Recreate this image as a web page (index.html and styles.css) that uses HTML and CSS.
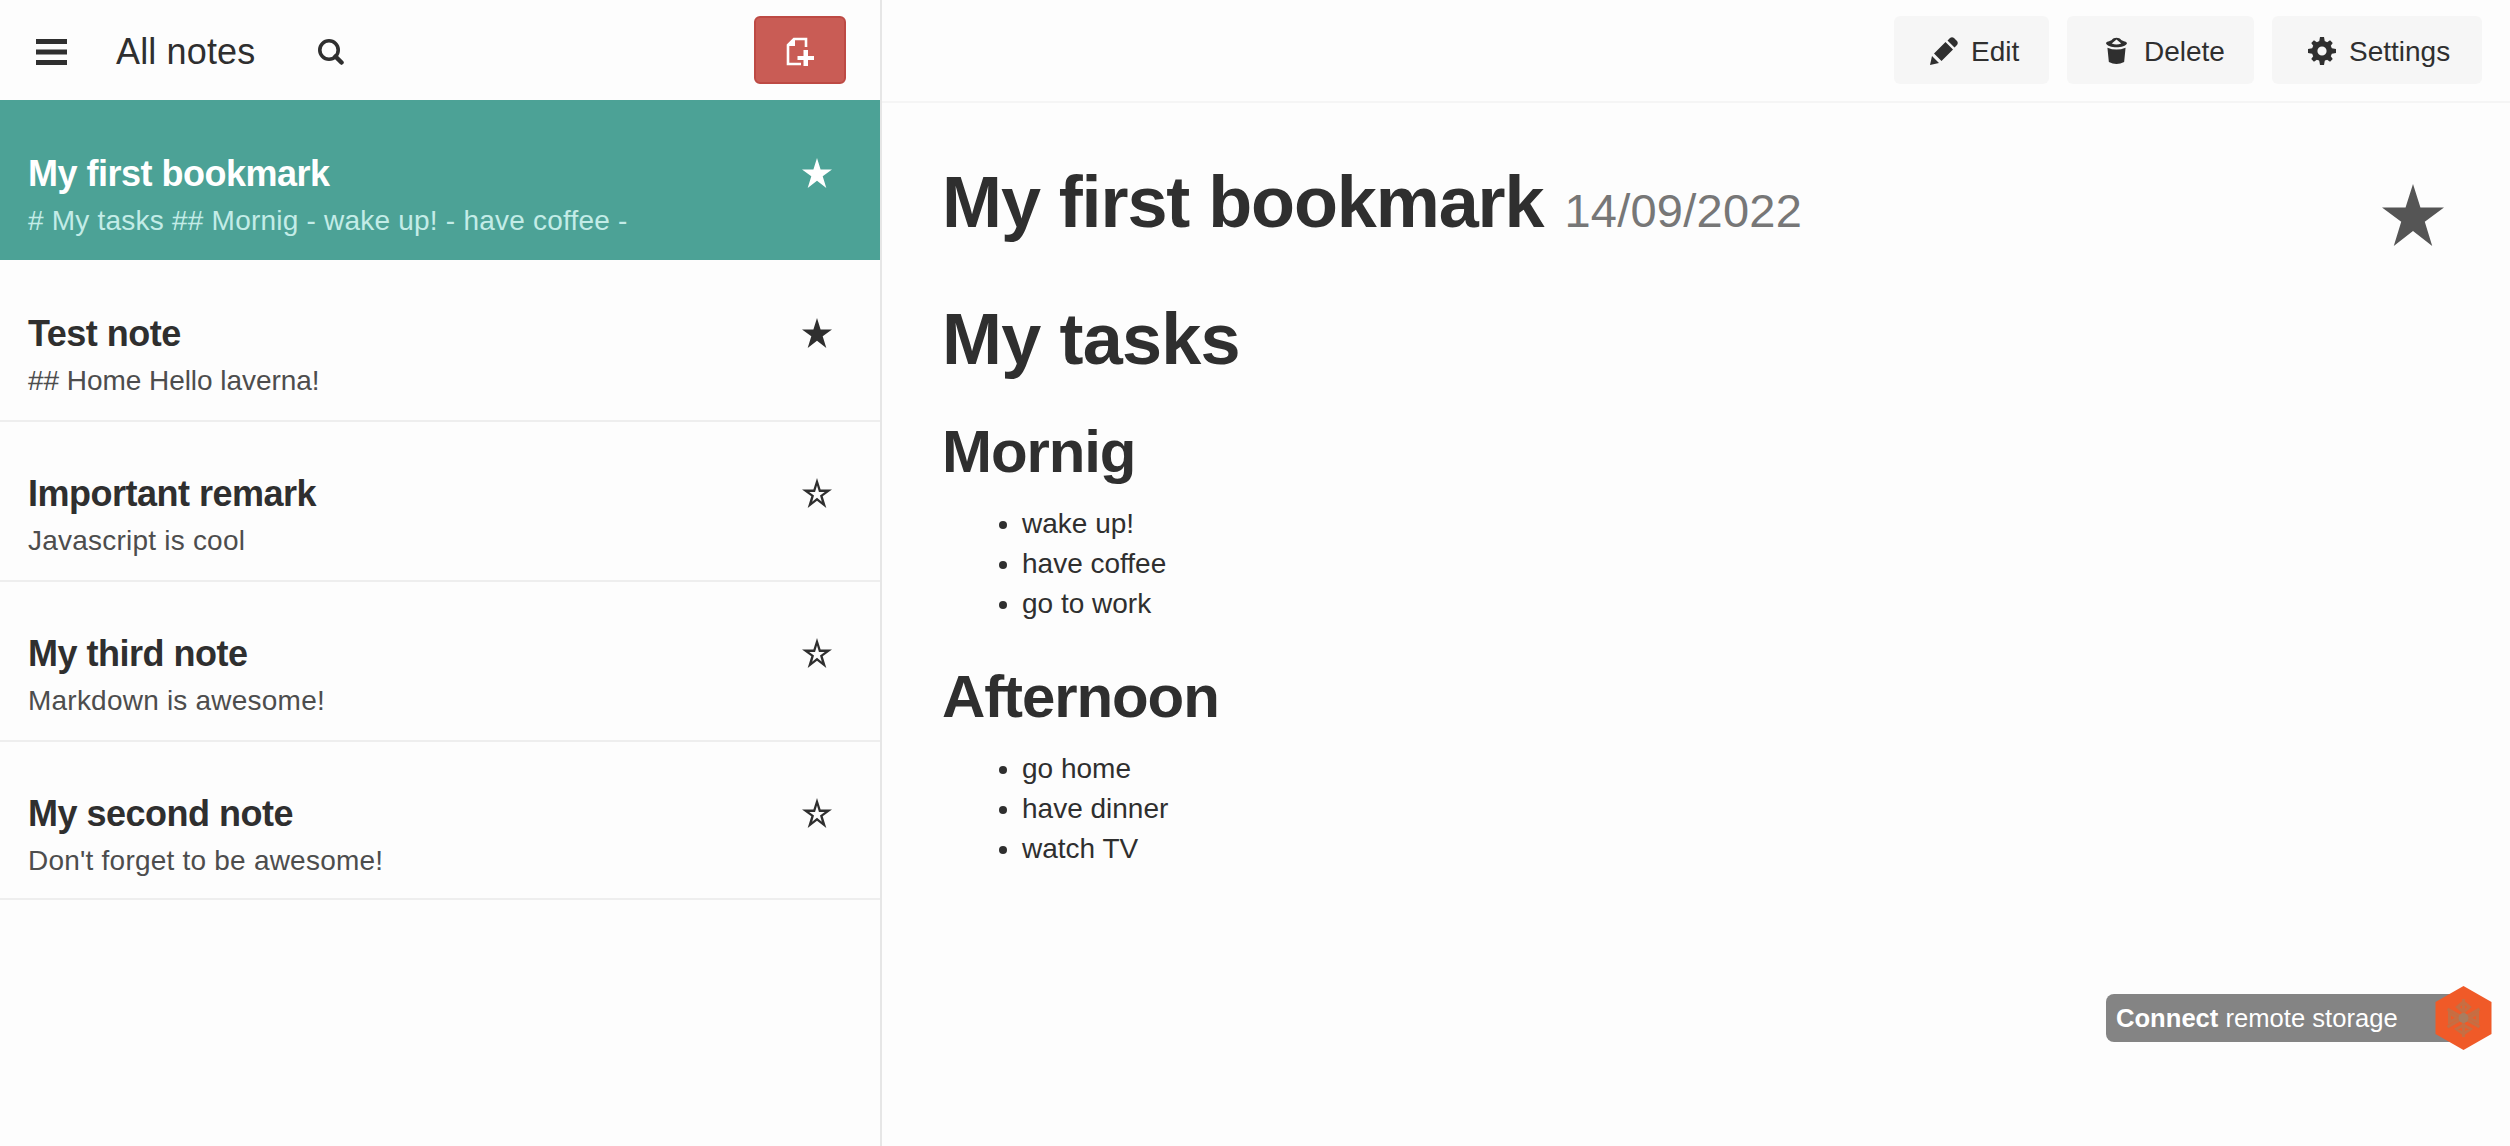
FILE: index.html
```html
<!DOCTYPE html>
<html lang="en">
<head>
<meta charset="utf-8">
<title>All notes</title>
<link rel="stylesheet" href="styles.css">
</head>
<body>
<div class="app">
  <aside class="sidebar">
    <header class="bar">
      <svg class="menu-icon" viewBox="0 0 31 26"><path d="M0 0h31v5H0zM0 10.500h31v5H0zM0 21h31v5H0z"/></svg>
      <span class="bar-title">All notes</span>
      <svg class="search-icon" viewBox="0 0 26 26"><circle cx="11" cy="11" r="9.200" fill="none" stroke="currentColor" stroke-width="3.600"/><path d="M17.500 17.500l6 6" stroke="currentColor" stroke-width="4.500" stroke-linecap="round"/></svg>
      <button class="new-note"><svg viewBox="0 0 28 30"><path d="M20 10V2H8L2 8v19h13" fill="none" stroke="currentColor" stroke-width="2.600"/><path d="M1 9h8V1z"/><path d="M17.500 13h4.500v6h6v4h-6v6h-4.500v-6h-6v-4h6z"/></svg></button>
    </header>
    <ul class="notes">
      <li class="note active"><div class="row"><h4>My first bookmark</h4><svg class="star"><use href="#star"/></svg></div><p># My tasks ## Mornig - wake up! - have coffee -</p></li>
      <li class="note"><div class="row"><h4>Test note</h4><svg class="star"><use href="#star"/></svg></div><p class="tight">## Home Hello laverna!</p></li>
      <li class="note"><div class="row"><h4>Important remark</h4><svg class="star"><use href="#star-o"/></svg></div><p>Javascript is cool</p></li>
      <li class="note"><div class="row"><h4>My third note</h4><svg class="star"><use href="#star-o"/></svg></div><p>Markdown is awesome!</p></li>
      <li class="note"><div class="row"><h4>My second note</h4><svg class="star"><use href="#star-o"/></svg></div><p>Don't forget to be awesome!</p></li>
    </ul>
  </aside>
  <main class="content">
    <header class="toolbar">
      <button class="btn edit"><svg viewBox="0 0 28 28"><path d="M0 28l2-9 7 7zM4 16.500L15.500 5l7.500 7.500L11.500 24zM17.500 3.500l2.500-2.500q2-1.500 4 0l3 3q1.500 2 0 4l-2.500 2.500z"/></svg><span>Edit</span></button>
      <button class="btn delete"><svg viewBox="0 0 22 28"><path fill-rule="evenodd" d="M0 6C0 4 4 4 6 2.500 8-.800 14-.800 16 2.500 18 4 22 4 22 6 20 11.500 2 11.500 0 6zM6 6.200q5 2 10 0L11 2z"/><path d="M1.500 10.500q9.500 4 19 0l-1.500 15q-8 4-16 0z"/></svg><span>Delete</span></button>
      <button class="btn settings"><svg viewBox="-14 -14 28 28"><circle r="7.400" fill="none" stroke="currentColor" stroke-width="5.600"/><g id="teeth"><path d="M-3-8.500L-2-14H2L3-8.500zM-3 8.500L-2 14H2L3 8.500zM-8.500-3L-14-2V2L-8.500 3zM8.500-3L14-2V2L8.500 3z"/></g><use href="#teeth" transform="rotate(45) scale(.95)"/></svg><span>Settings</span></button>
    </header>
    <article class="page">
      <div class="page-head"><h1>My first bookmark <small>14/09/2022</small></h1><svg class="big-star"><use href="#star"/></svg></div>
      <h1>My tasks</h1>
      <h2>Mornig</h2>
      <ul><li>wake up!</li><li>have coffee</li><li>go to work</li></ul>
      <h2>Afternoon</h2>
      <ul><li>go home</li><li>have dinner</li><li>watch TV</li></ul>
    </article>
  </main>
</div>
<div class="connect">
  <span><strong>Connect</strong> remote storage</span>
  <svg class="hex" viewBox="0 0 56 64"><path fill="#f05a28" d="M28 0l28 16v32L28 64 0 48V16z"/><g fill="none" stroke="#b5774f" stroke-width="3" opacity=".7"><path d="M28 13v38M12 23l32 18M44 23L12 41"/><path d="M28 16l-6 5 6 5 6-5zM14 27v9l8-4zM42 27v9l-8-4zM21 43l7-4 7 4-7 5z"/></g><circle cx="28" cy="32" r="5" fill="#a87d60"/></svg>
</div>
<svg class="defs">
  <symbol id="star" viewBox="0 0 100 100" preserveAspectRatio="none"><path d="M50 0L62 38H100L69 61 81 100 50 76 19 100 31 61 0 38H38z"/></symbol>
  <symbol id="star-o" viewBox="0 0 100 100" preserveAspectRatio="none"><path fill-rule="evenodd" d="M50 0L62 38H100L69 61 81 100 50 76 19 100 31 61 0 38H38zM50 25L43.500 46.500H24L40 58.500 34 79 50 66 66 79 60 58.500 76 46.500H56.500z"/></symbol>
</svg>
</body>
</html>
```
FILE: styles.css
```css
* { box-sizing: border-box; }
body {
  margin: 0;
  background: #fdfdfd;
  color: #2f2f2f;
  font: 28px/40px "Liberation Sans", Arial, sans-serif;
}
svg { fill: currentColor; display: block; flex: none; }
.defs { display: none; }
h1, h2, h4, p, ul { margin: 0; padding: 0; }
button { border: 0; font: inherit; color: inherit; padding: 0; display: flex; align-items: center; }

.app { display: flex; height: 1146px; overflow: hidden; }

.sidebar { width: 882px; flex: none; border-right: 2px solid #e6e6e6; }
.bar { height: 100px; display: flex; align-items: center; padding: 0 34px 0 36px; }
.menu-icon { width: 31px; height: 26px; margin-top: 3px; }
.bar-title { font-size: 36px; letter-spacing: .15px; margin: 3px 0 0 49px; }
.search-icon { width: 26px; height: 26px; margin: 4px 0 0 63px; }
.new-note { width: 92px; height: 68px; margin-left: auto; border: 2px solid #bd4a44; border-radius: 6px; background: #c95c55; color: #fff; justify-content: center; }
.new-note svg { width: 28px; height: 30px; margin-top: 3px; }

.notes { list-style: none; }
.note { height: 160px; padding: 55px 48px 0 28px; }
.note + .note + .note { border-top: 2px solid #eee; padding-top: 53px; }
.note:last-child { border-bottom: 2px solid #eee; }
.note .row { display: flex; justify-content: space-between; }
.note h4 { font-size: 36px; line-height: 38px; letter-spacing: -.5px; }
.note p { color: #4d4d4d; margin-top: 8px; white-space: nowrap; letter-spacing: .22px; }
.note .tight { letter-spacing: -.05px; }
.note.active { background: #4ca296; color: #fff; }
.note.active p { color: #c3ece7; }
.star { width: 30px; height: 30px; margin-top: 3px; }

.content { flex: 1; }
.toolbar { height: 103px; border-bottom: 2px solid #f5f5f5; display: flex; justify-content: flex-end; padding: 16px 28px 0 0; gap: 18px; }
.btn { height: 68px; background: #f6f6f6; border-radius: 6px; }
.btn span { margin-top: 3px; }
.edit { width: 155px; padding-left: 36px; gap: 13px; }
.delete { width: 187px; padding-left: 39px; gap: 17px; }
.settings { width: 210px; padding-left: 36px; gap: 13px; }
.btn svg { width: 28px; height: 28px; margin-top: 2px; }
.delete svg { width: 21px; }

.page { padding: 59px 66px 0 60px; }
.page-head { display: flex; justify-content: space-between; }
h1 { font-size: 72px; line-height: 80px; letter-spacing: -1.1px; }
small { font-size: 47px; font-weight: 400; color: #777; letter-spacing: .25px; margin-left: 2px; }
.big-star { width: 62px; height: 62px; margin-top: 22px; color: #555; }
.page > h1 { margin-top: 48px; letter-spacing: -.8px; }
h2 { font-size: 60px; line-height: 66px; letter-spacing: -1.1px; margin-top: 40px; }
.page ul { padding-left: 80px; margin-top: 19px; }

.connect { position: absolute; left: 2106px; top: 994px; width: 354px; height: 48px; padding-left: 10px; border-radius: 8px 0 0 8px; background: #848484; color: #fff; line-height: 48px; font-size: 25.6px; }
.hex { position: absolute; left: 329px; top: -8px; width: 57px; height: 64px; }
```
